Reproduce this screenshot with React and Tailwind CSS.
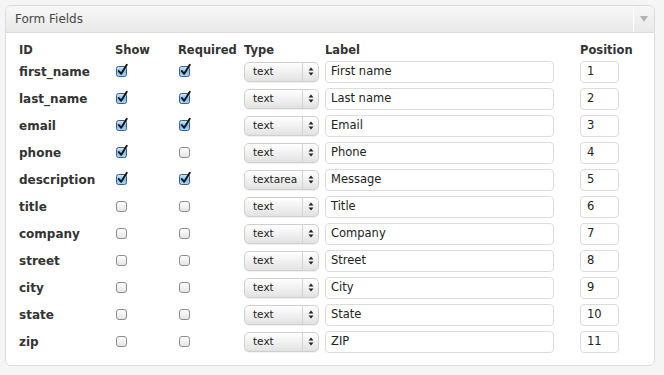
import React from 'react';

const fields = [
  { id: 'first_name', show: true, required: true, type: 'text', label: 'First name' },
  { id: 'last_name', show: true, required: true, type: 'text', label: 'Last name' },
  { id: 'email', show: true, required: true, type: 'text', label: 'Email' },
  { id: 'phone', show: true, required: false, type: 'text', label: 'Phone' },
  { id: 'description', show: true, required: true, type: 'textarea', label: 'Message' },
  { id: 'title', show: false, required: false, type: 'text', label: 'Title' },
  { id: 'company', show: false, required: false, type: 'text', label: 'Company' },
  { id: 'street', show: false, required: false, type: 'text', label: 'Street' },
  { id: 'city', show: false, required: false, type: 'text', label: 'City' },
  { id: 'state', show: false, required: false, type: 'text', label: 'State' },
  { id: 'zip', show: false, required: false, type: 'text', label: 'ZIP' },
];

function Check({ checked }) {
  return (
    <svg width="14" height="14" viewBox="0 0 14 14" className="block">
      <defs>
        <linearGradient id="cbOn" x1="0" y1="0" x2="0" y2="1">
          <stop offset="0" stopColor="#d6ecfb" />
          <stop offset="0.5" stopColor="#7fbdf0" />
          <stop offset="1" stopColor="#a9d6f8" />
        </linearGradient>
        <linearGradient id="cbOff" x1="0" y1="0" x2="0" y2="1">
          <stop offset="0" stopColor="#ffffff" />
          <stop offset="1" stopColor="#e4e4e4" />
        </linearGradient>
      </defs>
      {checked ? (
        <>
          <rect x="1.5" y="3.5" width="10" height="10" rx="2" fill="url(#cbOn)" stroke="#3b5f8a" />
          <path d="M3.8 8 L6.2 10.8 L11.8 1.8" fill="none" stroke="#111" strokeWidth="1.9" strokeLinecap="round" strokeLinejoin="round" />
        </>
      ) : (
        <rect x="1.5" y="3.5" width="10" height="10" rx="2.5" fill="url(#cbOff)" stroke="#8e8e8e" />
      )}
    </svg>
  );
}

function TypeSelect({ value }) {
  return (
    <div className="flex h-[20px] w-[75px] items-stretch rounded-[5px] border border-[#cfcfcf] bg-gradient-to-b from-[#ffffff] via-[#f1f1f1] to-[#e2e2e2] shadow-[0_1px_0_#f0f0f0]">
      <span className="flex flex-1 items-center pl-[8px] text-[10.5px] text-[#222]">{value}</span>
      <span className="flex w-[16px] items-center justify-center border-l border-[#d4d4d4]">
        <svg width="6" height="9" viewBox="0 0 6 9">
          <path d="M3 0.5 L5.5 3.5 L0.5 3.5 Z" fill="#222" />
          <path d="M3 8.5 L5.5 5.5 L0.5 5.5 Z" fill="#222" />
        </svg>
      </span>
    </div>
  );
}

export default function App() {
  return (
    <div className="min-h-[375px] w-[664px] bg-[#f5f5f5] pl-[5px] pt-[5px]" style={{ fontFamily: '"DejaVu Sans", sans-serif' }}>
      <div className="h-[361px] w-[650px] overflow-hidden rounded-[6px] border border-[#dcdcdc] bg-white">
        {/* Header */}
        <div className="flex h-[27px] items-stretch border-b border-[#dcdcdc] bg-gradient-to-b from-[#f7f7f7] to-[#e9e9e9]">
          <div className="flex flex-1 items-center pl-[9px] text-[12px] font-medium text-[#464646]">Form Fields</div>
          <div className="flex w-[21px] items-center justify-center border-l border-white">
            <svg width="8" height="6" viewBox="0 0 8 6">
              <path d="M0 0 L8 0 L4 6 Z" fill="#b4b4b4" />
            </svg>
          </div>
        </div>

        {/* Table */}
        <div className="pl-[13px] pt-[9px]">
          <div className="grid h-[16px] grid-cols-[96px_63px_66px_81px_255px_60px] items-center text-[11.5px] font-bold text-[#333]">
            <span>ID</span>
            <span>Show</span>
            <span>Required</span>
            <span>Type</span>
            <span>Label</span>
            <span>Position</span>
          </div>
          {fields.map((f, i) => (
            <div key={f.id} className="grid h-[27px] grid-cols-[96px_63px_66px_81px_255px_60px] items-center">
              <span className="text-[12px] font-bold text-[#333]">{f.id}</span>
              <span className="-mt-[3px]"><Check checked={f.show} /></span>
              <span className="-mt-[3px]"><Check checked={f.required} /></span>
              <TypeSelect value={f.type} />
              <div className="flex h-[22px] w-[229px] items-center rounded-[4px] border border-[#dcdcdc] bg-white pl-[5px] text-[11.5px] text-[#222]">
                {f.label}
              </div>
              <div className="flex h-[22px] w-[39px] items-center rounded-[4px] border border-[#dcdcdc] bg-white pl-[6px] text-[11.5px] text-[#222]">
                {i + 1}
              </div>
            </div>
          ))}
        </div>
      </div>
    </div>
  );
}
